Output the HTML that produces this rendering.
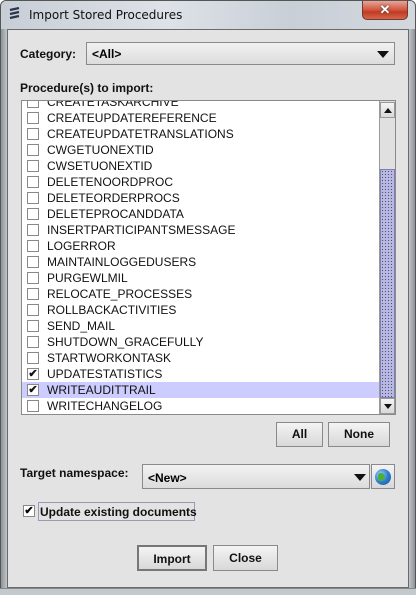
<!DOCTYPE html>
<html><head><style>
*{margin:0;padding:0;box-sizing:border-box}
body{width:416px;height:595px;overflow:hidden;background:#fff;font-family:"Liberation Sans",Arial,sans-serif;position:relative}
.frame{position:absolute;left:0;top:0;width:416px;height:595px;border:1px solid #555;border-radius:6px 6px 0 0;background:linear-gradient(90deg,#8e9398 0,#c0c5ca 6px,#d6dbe0 50%,#c0c5ca calc(100% - 6px),#8e9398 100%)}
.titlebg{position:absolute;left:1px;top:1px;right:1px;height:28px;background:linear-gradient(90deg,#c8ced6,#dde2e8 40%,#c9cfd7 70%,#d3d8de);border-radius:5px 5px 0 0}
.title{position:absolute;left:29px;top:8px;font-size:12px;color:#111;font-family:"DejaVu Sans","Liberation Sans",sans-serif}
.close{position:absolute;left:362px;top:1px;width:46px;height:19px;border:1px solid #6d3a32;border-top:none;border-radius:0 0 5px 5px;background:linear-gradient(#e8a597,#d1553f 50%,#c23a22 60%,#d4664c);color:#fff;font-weight:bold;font-size:13px;text-align:center;line-height:17px;text-shadow:0 0 2px #333}
.content{position:absolute;left:7px;top:29px;width:402px;height:559px;background:#e3e3e3;border:1px solid #6a6a6a}
.bottom{position:absolute;left:0;top:588px;width:416px;height:7px;background:#c4c9ce;border-top:1px solid #888}
.lbl{position:absolute;font-size:12px;font-weight:bold;color:#111}
.combo{position:absolute;border:1px solid #8a8a8a;background:linear-gradient(#f2f2f2,#dcdcdc);font-size:12px;font-weight:bold}
.arrow{position:absolute;width:0;height:0;border-left:6px solid transparent;border-right:6px solid transparent;border-top:7px solid #111}
.list{position:absolute;left:21px;top:100px;width:375px;height:315px;border:1px solid #8a8a8a;background:#fff;overflow:hidden}
.row{position:absolute;left:0;width:357px;height:16px;font-size:12px;color:#111;line-height:16px}
.row span{position:absolute;left:25px}
.cb{position:absolute;left:5px;top:2px;width:12px;height:12px;border:1px solid #888;background:#fff;font-size:11px;line-height:10px;text-align:center;font-weight:bold}
.sel{background:#ccccff}
.btn{position:absolute;border:1px solid #8a8a8a;background:linear-gradient(#f4f4f4,#d8d8d8);font-size:12px;font-weight:bold;text-align:center;color:#111}
</style></head><body>
<div class="frame"></div>
<div class="titlebg"></div>
<svg style="position:absolute;left:9px;top:7px" width="12" height="14" viewBox="0 0 12 14"><path d="M1 3 L10 1 M1 7 L10 5 M1 11 L10 9" stroke="#2b3550" stroke-width="2.2" fill="none"/></svg>
<div class="title">Import Stored Procedures</div>
<div class="close">✕</div>
<div class="content"></div>
<div class="bottom"></div>

<div class="lbl" style="left:20px;top:47px">Category:</div>
<div class="combo" style="left:86px;top:42px;width:309px;height:23px"><span style="position:absolute;left:5px;top:4px">&lt;All&gt;</span><div class="arrow" style="left:290px;top:8px"></div></div>

<div class="lbl" style="left:20px;top:81px">Procedure(s) to import:</div>
<div class="list">
<div class="row" style="top:-7px"><div class="cb"></div><span>CREATETASKARCHIVE</span></div>
<div class="row" style="top:9px"><div class="cb"></div><span>CREATEUPDATEREFERENCE</span></div>
<div class="row" style="top:25px"><div class="cb"></div><span>CREATEUPDATETRANSLATIONS</span></div>
<div class="row" style="top:41px"><div class="cb"></div><span>CWGETUONEXTID</span></div>
<div class="row" style="top:57px"><div class="cb"></div><span>CWSETUONEXTID</span></div>
<div class="row" style="top:73px"><div class="cb"></div><span>DELETENOORDPROC</span></div>
<div class="row" style="top:89px"><div class="cb"></div><span>DELETEORDERPROCS</span></div>
<div class="row" style="top:105px"><div class="cb"></div><span>DELETEPROCANDDATA</span></div>
<div class="row" style="top:121px"><div class="cb"></div><span>INSERTPARTICIPANTSMESSAGE</span></div>
<div class="row" style="top:137px"><div class="cb"></div><span>LOGERROR</span></div>
<div class="row" style="top:153px"><div class="cb"></div><span>MAINTAINLOGGEDUSERS</span></div>
<div class="row" style="top:169px"><div class="cb"></div><span>PURGEWLMIL</span></div>
<div class="row" style="top:185px"><div class="cb"></div><span>RELOCATE_PROCESSES</span></div>
<div class="row" style="top:201px"><div class="cb"></div><span>ROLLBACKACTIVITIES</span></div>
<div class="row" style="top:217px"><div class="cb"></div><span>SEND_MAIL</span></div>
<div class="row" style="top:233px"><div class="cb"></div><span>SHUTDOWN_GRACEFULLY</span></div>
<div class="row" style="top:249px"><div class="cb"></div><span>STARTWORKONTASK</span></div>
<div class="row" style="top:265px"><div class="cb">✔</div><span>UPDATESTATISTICS</span></div>
<div class="row sel" style="top:281px"><div class="cb">✔</div><span>WRITEAUDITTRAIL</span></div>
<div class="row" style="top:297px"><div class="cb"></div><span>WRITECHANGELOG</span></div>
<div style="position:absolute;left:357px;top:0;width:16px;height:313px;background:#e0e0e0;border-left:1px solid #999">
<div style="position:absolute;left:0;top:1px;width:15px;height:16px;border:1px solid #999;background:linear-gradient(#f4f4f4,#d8d8d8)"><div style="position:absolute;left:3px;top:5px;border-left:4px solid transparent;border-right:4px solid transparent;border-bottom:5px solid #111"></div></div>
<div style="position:absolute;left:0;top:68px;width:15px;height:229px;border:1px solid #8080b0;background:#b8b8e8;background-image:radial-gradient(#555 0.6px,transparent 0.8px);background-size:3px 3px"></div>
<div style="position:absolute;left:0;top:297px;width:15px;height:16px;border:1px solid #999;background:linear-gradient(#f4f4f4,#d8d8d8)"><div style="position:absolute;left:3px;top:5px;border-left:4px solid transparent;border-right:4px solid transparent;border-top:5px solid #111"></div></div>
</div>
</div>

<div class="btn" style="left:276px;top:422px;width:47px;height:25px;line-height:23px">All</div>
<div class="btn" style="left:328px;top:422px;width:62px;height:25px;line-height:23px">None</div>

<div class="lbl" style="left:20px;top:466px">Target namespace:</div>
<div class="combo" style="left:142px;top:464px;width:228px;height:25px"><span style="position:absolute;left:5px;top:6px">&lt;New&gt;</span><div class="arrow" style="left:211px;top:9px"></div></div>
<div class="btn" style="left:371px;top:464px;width:24px;height:25px"><div style="position:absolute;left:3px;top:4px;width:16px;height:16px;border-radius:50%;background:radial-gradient(circle at 35% 35%,#9fd3ff,#2f7fcf 50%,#1b4f8f);"></div><div style="position:absolute;left:6px;top:8px;width:7px;height:8px;border-radius:40% 60% 50% 40%;background:#4caf3a"></div></div>

<div class="cb" style="left:23px;top:505px;width:12px;height:12px">✔</div>
<div style="position:absolute;left:38px;top:502px;width:157px;height:19px;border:1px solid #9a9ab8"></div>
<div class="lbl" style="left:40px;top:505px">Update existing documents</div>

<div class="btn" style="left:137px;top:545px;width:70px;height:26px;line-height:24px;border:2px solid #777">Import</div>
<div class="btn" style="left:213px;top:545px;width:65px;height:26px;line-height:24px">Close</div>
</body></html>
